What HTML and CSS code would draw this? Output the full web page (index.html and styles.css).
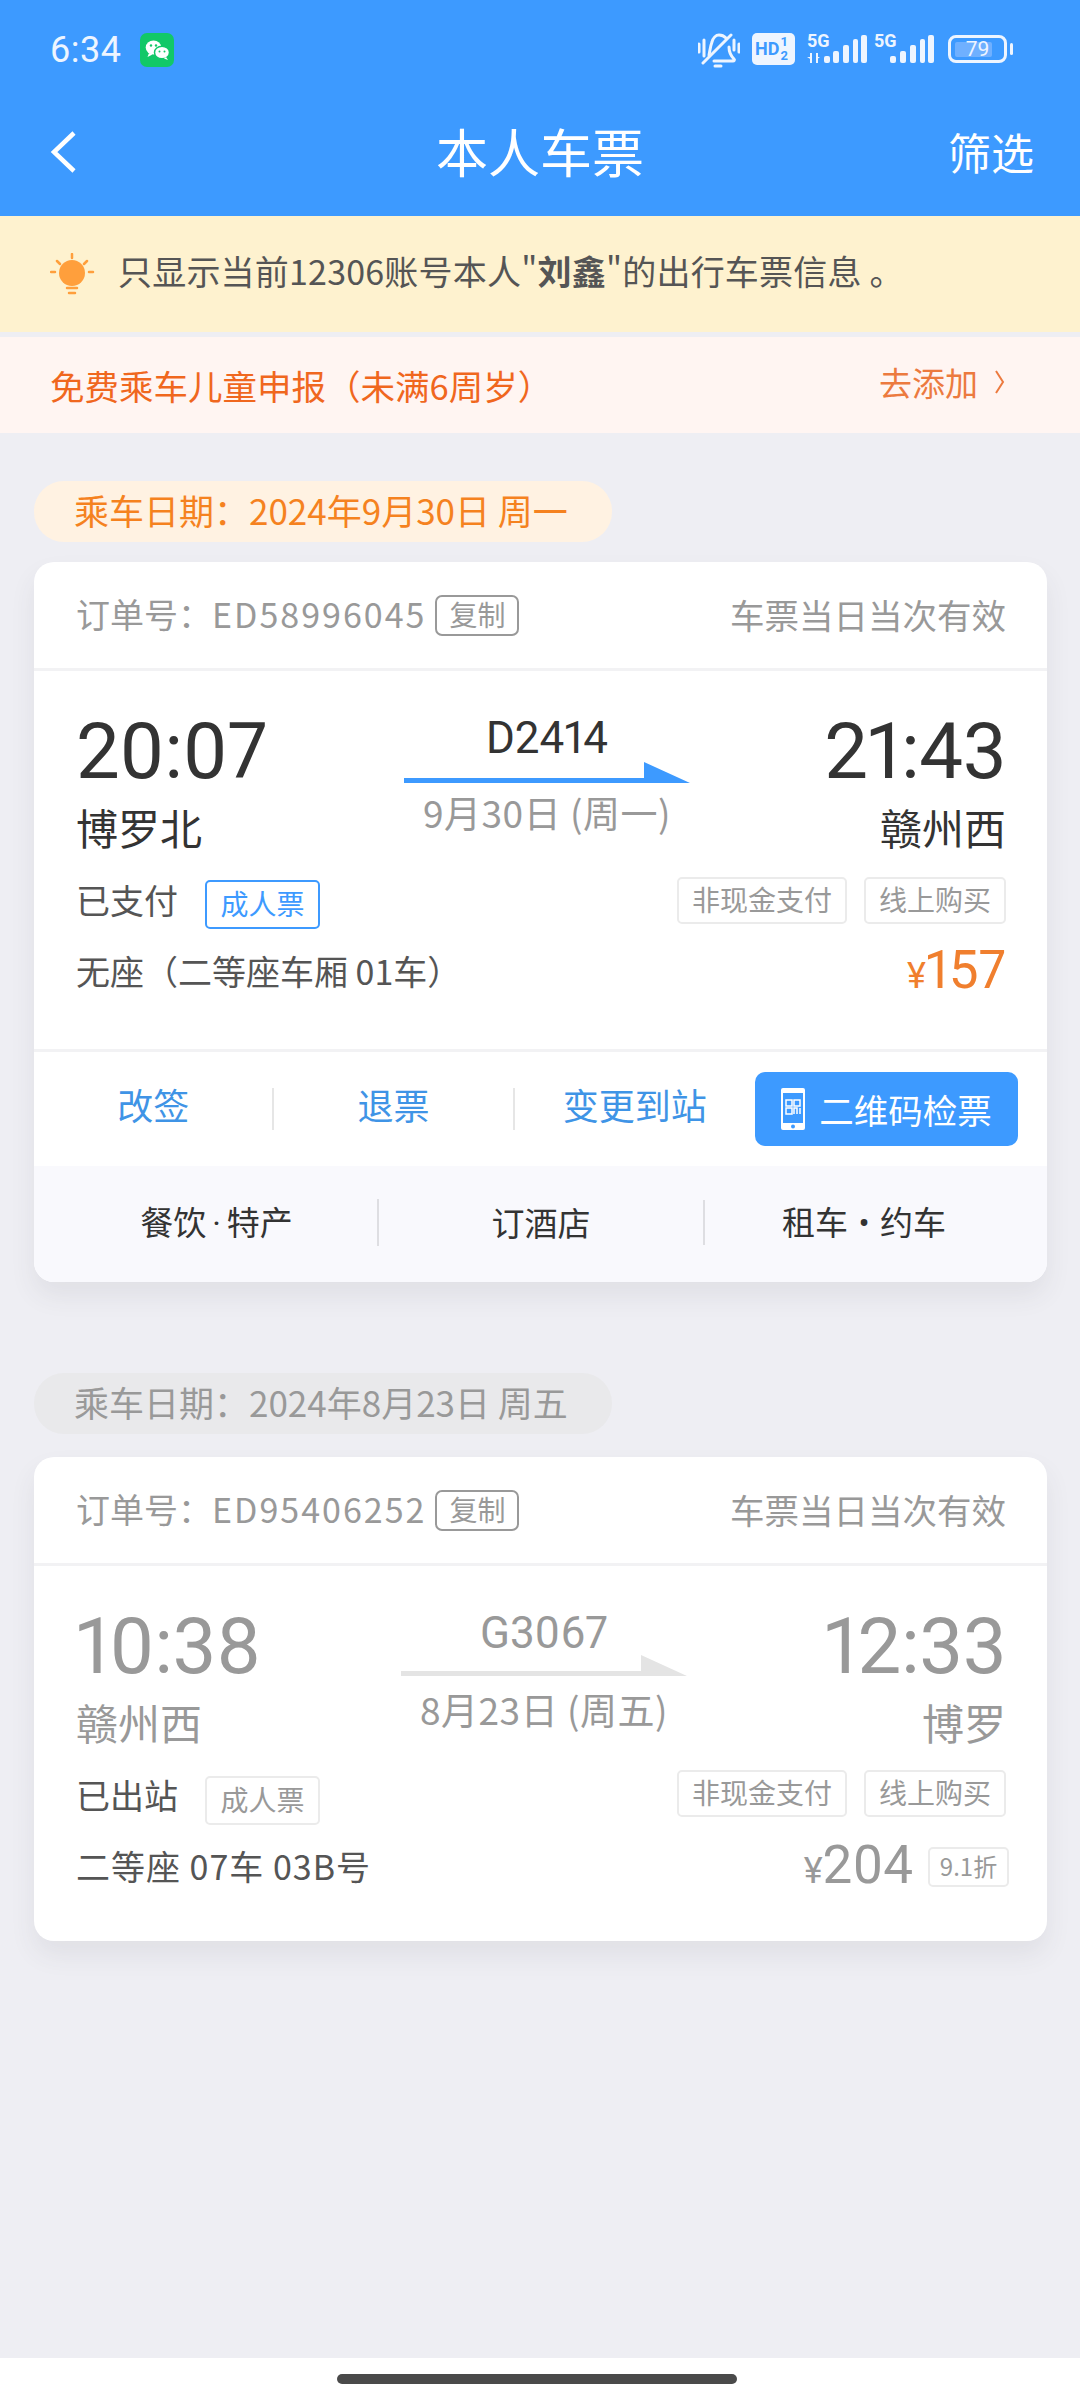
FILE: index.html
```html
<!DOCTYPE html>
<html lang="zh-CN">
<head>
    <meta charset="UTF-8">
    <meta name="viewport" content="width=device-width, initial-scale=1.0">
    <title>本人车票</title>
    <link rel="stylesheet" href="styles.css">
</head>
<body>

<header class="top">
    <div class="status">
        <span class="clock">6:34</span>
        <span class="wechat">
            <svg width="34" height="34" viewBox="0 0 34 34">
                <rect width="34" height="34" rx="7" fill="#12c868"/>
                <ellipse cx="13.500" cy="14.500" rx="7.800" ry="7" fill="#fff"/>
                <path d="M9 20l-1.500 4 5-2.500z" fill="#fff"/>
                <ellipse cx="22" cy="19.500" rx="7.500" ry="6.300" fill="#fff" stroke="#12c868" stroke-width="1.500"/>
                <path d="M26 24l2 3-4-1.500z" fill="#fff"/>
                <circle cx="11" cy="12.500" r="1.200" fill="#12c868"/>
                <circle cx="16" cy="12.500" r="1.200" fill="#12c868"/>
                <circle cx="19.500" cy="18.500" r="1" fill="#12c868"/>
                <circle cx="24.500" cy="18.500" r="1" fill="#12c868"/>
            </svg>
        </span>
        <span class="status-right">
            <svg width="42" height="35" viewBox="0 0 42 35" fill="none" stroke="#eef5ff" stroke-width="3" stroke-linecap="round">
                <path d="M11 22c1-4 1-8 3-13 1-4 4-7 7-7 3 0 5 1 7 3"/>
                <path d="M31 14c0 4 1 8 5 12 1 1 0 2-1 2H16"/>
                <path d="M5 30L33 2"/>
                <path d="M1 11v8M6 7v16M36 7v10M41 11v8"/>
                <path d="M17 33h6"/>
            </svg>
            <span class="hd">HD<span class="hd-sim"><i>1</i><i>2</i></span></span>
            <span class="net net-first">
                <span class="net-5g">5G</span>
                <svg width="60" height="30" viewBox="0 0 60 30" fill="#eef5ff">
                    <path d="M3 20h2v10H3zM0 24h5l0 3zM9 20h2v10H9zM9 24h4l-4 3z"/>
                    <rect x="17" y="23" width="6" height="7" rx="2"/>
                    <rect x="26" y="18" width="6" height="12" rx="2"/>
                    <rect x="36" y="12" width="6" height="18" rx="2"/>
                    <rect x="46" y="6" width="5" height="24" rx="2"/>
                    <rect x="54" y="2" width="6" height="28" rx="2"/>
                </svg>
            </span>
            <span class="net">
                <span class="net-5g">5G</span>
                <svg width="60" height="30" viewBox="0 0 60 30" fill="#eef5ff">
                    <rect x="16" y="23" width="6" height="7" rx="2"/>
                    <rect x="26" y="18" width="6" height="12" rx="2"/>
                    <rect x="36" y="12" width="6" height="18" rx="2"/>
                    <rect x="46" y="6" width="5" height="24" rx="2"/>
                    <rect x="54" y="2" width="6" height="28" rx="2"/>
                </svg>
            </span>
            <span class="battery"><span class="battery-fill"></span><span class="battery-num">79</span></span>
            <span class="battery-cap"></span>
        </span>
    </div>
    <div class="nav">
        <svg class="back" width="28" height="42" viewBox="0 0 28 42" fill="none" stroke="#fff" stroke-width="4.500">
            <path d="M25 2L5 21l20 19"/>
        </svg>
        <span class="nav-title">本人车票</span>
        <span class="nav-filter">筛选</span>
    </div>
</header>

<div class="notice">
    <svg class="bulb" width="45" height="42" viewBox="0 0 45 42">
        <g stroke="#ff9f3c" stroke-width="2.500" stroke-linecap="round" fill="none">
            <path d="M22 1v4M7 8l3 3M37 8l-3 3M1 19h4M39 19h4"/>
            <path d="M17 35h10"/>
            <path d="M19 40h6"/>
        </g>
        <circle cx="22" cy="20" r="13" fill="#ff9f3c"/>
    </svg>
    <span>只显示当前12306账号本人"<b>刘鑫</b>"的出行车票信息 。</span>
</div>

<div class="child-bar">
    <span>免费乘车儿童申报（未满6周岁）</span>
    <span class="child-add">去添加
        <svg width="11" height="24" viewBox="0 0 11 24" fill="none" stroke="#ec7a3f" stroke-width="2"><path d="M2 1l7 11-7 11"/></svg>
    </span>
</div>

<section class="trip">
    <div class="date-pill">乘车日期：2024年9月30日 周一</div>
    <div class="card">
        <div class="order">
            <span class="order-label">订单号：<span class="order-no">ED58996045</span></span>
            <span class="copy">复制</span>
            <span class="valid">车票当日当次有效</span>
        </div>
        <div class="ticket">
            <div class="route">
                <div class="end">
                    <div class="time">20:07</div>
                    <div class="station">博罗北</div>
                </div>
                <div class="mid">
                    <div class="train">D2414</div>
                    <svg class="arrow" width="286" height="22" viewBox="0 0 286 22"><path d="M0 16h240V0l46 21H0z" fill="#3d9aff"/></svg>
                    <div class="mid-date">9月30日 (周一)</div>
                </div>
                <div class="end end-right">
                    <div class="time">21:43</div>
                    <div class="station">赣州西</div>
                </div>
            </div>
            <div class="tags-row">
                <span class="state">已支付</span>
                <span class="tag-adult">成人票</span>
                <span class="tag">非现金支付</span>
                <span class="tag">线上购买</span>
            </div>
            <div class="seat-row">
                <span class="seat">无座（二等座车厢 01车）</span>
                <span class="price"><small>¥</small>157</span>
            </div>
        </div>
        <div class="actions">
            <span class="act act-line">改签</span>
            <span class="act act-line">退票</span>
            <span class="act">变更到站</span>
            <span class="qr-btn">
                <svg width="24" height="42" viewBox="0 0 24 42">
                    <path fill="#fff" fill-rule="evenodd" d="M2 0h20a2 2 0 0 1 2 2v38a2 2 0 0 1-2 2H2a2 2 0 0 1-2-2V2a2 2 0 0 1 2-2zM2 5v30h20V5z"/>
                    <circle cx="12" cy="38.500" r="2" fill="#3d9aff"/>
                    <g fill="none" stroke="#fff" stroke-width="1.500">
                        <rect x="5" y="12" width="6" height="6"/>
                        <rect x="13" y="12" width="6" height="6"/>
                        <rect x="5" y="20" width="6" height="6"/>
                        <path d="M13 26v-6h3v6M19 20v6"/>
                    </g>
                </svg>
                二维码检票
            </span>
        </div>
        <div class="extras">
            <span class="extra extra-food">餐饮<span class="dot">·</span>特产</span>
            <span class="extra extra-hotel">订酒店</span>
            <span class="extra extra-car">租车 <span class="dot">•</span> 约车</span>
        </div>
    </div>
</section>

<section class="trip trip-old">
    <div class="date-pill">乘车日期：2024年8月23日 周五</div>
    <div class="card">
        <div class="order">
            <span class="order-label">订单号：<span class="order-no">ED95406252</span></span>
            <span class="copy">复制</span>
            <span class="valid">车票当日当次有效</span>
        </div>
        <div class="ticket">
            <div class="route">
                <div class="end">
                    <div class="time">10:38</div>
                    <div class="station">赣州西</div>
                </div>
                <div class="mid">
                    <div class="train">G3067</div>
                    <svg class="arrow" width="286" height="22" viewBox="0 0 286 22"><path d="M0 16h240V0l46 21H0z" fill="#e4e4e4"/></svg>
                    <div class="mid-date">8月23日 (周五)</div>
                </div>
                <div class="end end-right">
                    <div class="time">12:33</div>
                    <div class="station">博罗</div>
                </div>
            </div>
            <div class="tags-row">
                <span class="state">已出站</span>
                <span class="tag-adult">成人票</span>
                <span class="tag">非现金支付</span>
                <span class="tag">线上购买</span>
            </div>
            <div class="seat-row">
                <span class="seat">二等座 07车 03B号</span>
                <span class="price"><small>¥</small>204</span>
                <span class="discount">9.1折</span>
            </div>
        </div>
    </div>
</section>

<div class="home-bar"><span class="home-pill"></span></div>

</body>
</html>
```

FILE: styles.css
```css
* {
    box-sizing: border-box;
}
html, body {
    margin: 0;
    padding: 0;
}
body {
    width: 1080px;
    height: 2400px;
    position: relative;
    overflow: hidden;
    background-color: #eeeef3;
    font-family: "Noto Sans CJK SC", Roboto, sans-serif;
    color: #333;
}

/* header */
.top {
    height: 216px;
    background-color: #3d9aff;
    color: #fff;
}
.status {
    height: 100px;
    padding: 30px 67px 0 50px;
    display: flex;
    align-items: flex-start;
}
.clock {
    font-family: Roboto, sans-serif;
    font-size: 36px;
    line-height: 40px;
    color: #eef5ff;
    letter-spacing: 0.5px;
}
.wechat {
    margin-left: 19px;
    margin-top: 3px;
    display: flex;
}
.status-right {
    margin-left: auto;
    display: flex;
    align-items: center;
    height: 40px;
    color: #eef5ff;
}
.hd {
    margin-left: 12px;
    margin-bottom: 2px;
    width: 43px;
    height: 32px;
    border-radius: 5px;
    background-color: #eef5ff;
    color: #3d9aff;
    font: bold 18px/32px Roboto, sans-serif;
    display: flex;
    padding-left: 3px;
}
.hd-sim {
    display: flex;
    flex-direction: column;
    font-size: 13px;
    line-height: 14px;
    margin-left: 1px;
    padding-top: 2px;
}
.hd-sim i {
    font-style: normal;
}
.net {
    position: relative;
    display: flex;
    height: 30px;
    margin-left: 7px;
    margin-bottom: 4px;
}
.net-first {
    margin-left: 12px;
}
.net-5g {
    position: absolute;
    left: 0;
    top: -1px;
    font: bold 18px/18px Roboto, sans-serif;
}
.battery {
    position: relative;
    margin-left: 14px;
    margin-bottom: 2px;
    width: 59px;
    height: 28px;
    border: 3px solid #eef5ff;
    border-radius: 8px;
}
.battery-fill {
    position: absolute;
    left: 4px;
    top: 4px;
    bottom: 3px;
    width: 37px;
    background-color: #6fb0ff;
    border-radius: 2px;
}
.battery-num {
    position: absolute;
    left: 0;
    right: 0;
    top: 0;
    text-align: center;
    font: 21px/22px Roboto, sans-serif;
}
.battery-cap {
    margin-left: 3px;
    margin-bottom: 2px;
    width: 3px;
    height: 12px;
    border-radius: 2px;
    background-color: #eef5ff;
}
.nav {
    height: 116px;
    padding: 0 46px 12px 49px;
    display: flex;
    align-items: center;
    position: relative;
}
.nav-title {
    position: absolute;
    left: 0;
    right: 0;
    top: 21px;
    text-align: center;
    font-size: 52px;
    line-height: 60px;
}
.nav-filter {
    margin-left: auto;
    margin-bottom: 3px;
    font-size: 43px;
    line-height: 60px;
}

/* yellow and pink bars */
.notice {
    height: 116px;
    background-color: #fef2cf;
    display: flex;
    align-items: center;
    padding: 0 0 8px 50px;
    gap: 23px;
    font-size: 34px;
    letter-spacing: 0.2px;
    color: #555;
}
.bulb {
    margin-top: 8px;
}
.notice b {
    font-weight: 700;
}
.child-bar {
    margin-top: 5px;
    height: 96px;
    background-color: #fff5f2;
    display: flex;
    align-items: center;
    justify-content: space-between;
    padding: 0 75px 0 50px;
    font-size: 34.500px;
    color: #f0671e;
}
.child-add {
    display: flex;
    align-items: center;
    gap: 16px;
    margin-bottom: 6px;
    font-size: 33px;
    color: #ec7a3f;
}

/* trips */
.trip {
    padding: 48px 33px 0 34px;
}
.trip-old {
    padding-top: 91px;
}
.date-pill {
    width: 578px;
    height: 61px;
    border-radius: 30px;
    background-color: #fff2e2;
    color: #f5821f;
    font-size: 35px;
    line-height: 58px;
    padding-left: 40px;
    white-space: nowrap;
}
.card {
    margin-top: 20px;
    background-color: #fff;
    border-radius: 20px;
    box-shadow: 0 14px 26px rgba(60, 60, 80, 0.08);
    overflow: hidden;
}
.trip-old .card {
    margin-top: 23px;
}
.order {
    height: 109px;
    padding: 0 41px 0 42px;
    border-bottom: 3px solid #f2f2f4;
    display: flex;
    align-items: center;
    font-size: 34px;
    color: #999;
}
.order-label {
    margin-bottom: 3px;
}
.order-no {
    letter-spacing: 2px;
}
.copy {
    margin-left: 9px;
    width: 84px;
    height: 41px;
    border: 2px solid #999;
    border-radius: 7px;
    font-size: 28px;
    line-height: 35px;
    text-align: center;
}
.valid {
    margin-left: auto;
    margin-bottom: 3px;
    font-size: 34.500px;
}
.ticket {
    padding: 0 41px 0 42px;
}
.route {
    display: flex;
    justify-content: space-between;
    height: 204px;
    padding-top: 41px;
}
.time {
    font-family: Roboto, sans-serif;
    font-variant-numeric: proportional-nums;
    font-size: 78px;
    line-height: 80px;
    letter-spacing: -0.5px;
    color: #333;
}
.station {
    font-size: 42px;
    line-height: 56px;
    margin-top: 7px;
    color: #333;
}
.end-right {
    text-align: right;
}
.mid {
    position: absolute;
    left: 404px;
    width: 286px;
    text-align: center;
}
.train {
    font-family: Roboto, sans-serif;
    font-variant-numeric: proportional-nums;
    font-size: 44px;
    line-height: 46px;
    margin-top: 3px;
    color: #333;
}
.arrow {
    display: block;
    margin-top: 1px;
}
.mid-date {
    font-size: 37px;
    line-height: 50px;
    margin-top: 3px;
    letter-spacing: 0.5px;
    color: #999;
    white-space: nowrap;
}
.tags-row {
    display: flex;
    align-items: flex-start;
    height: 65px;
}
.state {
    font-size: 34px;
    line-height: 50px;
    color: #555;
}
.tag-adult {
    margin-left: 27px;
    margin-top: 5px;
    width: 115px;
    height: 49px;
    border: 2px solid #3d9aff;
    border-radius: 5px;
    font-size: 28px;
    line-height: 43px;
    text-align: center;
    color: #3d9aff;
}
.tag {
    margin-top: 2px;
    height: 47px;
    border: 2px solid #ebebeb;
    border-radius: 5px;
    padding: 0 13px;
    font-size: 28px;
    line-height: 41px;
    color: #999;
}
.tag-adult + .tag {
    margin-left: auto;
    margin-right: 17px;
}
.seat-row {
    display: flex;
    align-items: center;
    height: 66px;
}
.seat {
    font-size: 34px;
    color: #555;
    margin-right: auto;
    margin-bottom: 6px;
}
.price {
    font-family: Roboto, sans-serif;
    font-variant-numeric: proportional-nums;
    font-size: 53px;
    line-height: 60px;
    color: #f07f2e;
}
.price small {
    font-size: 36px;
}
.discount {
    margin-left: 15px;
    margin-right: -3px;
    margin-bottom: 2px;
    width: 81px;
    height: 40px;
    border: 2px solid #ebebeb;
    border-radius: 5px;
    font-size: 24px;
    line-height: 34px;
    text-align: center;
    color: #999;
}

/* buttons under the ticket */
.actions {
    margin-top: 43px;
    height: 117px;
    border-top: 3px solid #f2f2f4;
    display: flex;
    align-items: center;
    padding: 0 29px 0 0;
}
.act {
    width: 241px;
    font-size: 36px;
    line-height: 32px;
    padding-bottom: 10px;
    text-align: center;
    color: #3f94e6;
    white-space: nowrap;
}
.act-line {
    border-right: 2px solid #e6e6e6;
}
.qr-btn {
    margin-left: auto;
    width: 264px;
    height: 74px;
    border-radius: 10px;
    background-color: #3d9aff;
    color: #fff;
    font-size: 34.500px;
    display: flex;
    align-items: center;
    justify-content: center;
    gap: 14px;
    white-space: nowrap;
}
.extras {
    height: 116px;
    background-color: #f9f9fd;
    display: flex;
    align-items: center;
    padding-bottom: 4px;
}
.extra {
    font-size: 33px;
    line-height: 45px;
    text-align: center;
    color: #333;
    white-space: nowrap;
}
.extra-food {
    width: 345px;
    padding-left: 22px;
    border-right: 2px solid #dedee2;
}
.extra-hotel {
    width: 326px;
    border-right: 2px solid #dedee2;
}
.extra-car {
    width: 342px;
    padding-right: 24px;
}
.dot {
    font-family: Roboto, sans-serif;
    margin: 0 6px;
}
.extra-car .dot {
    margin: 0 3px;
}

/* greyed out second card */
.trip-old .date-pill {
    background-color: #e9e9eb;
    color: #999;
}
.trip-old .time,
.trip-old .station,
.trip-old .train,
.trip-old .price {
    color: #999;
}
.trip-old .mid {
    left: 401px;
}
.trip-old .arrow {
    margin-top: -1px;
}
.trip-old .mid-date {
    margin-top: 7px;
}
.trip-old .tag-adult {
    margin-top: 6px;
    border-color: #ebebeb;
    color: #999;
}
.trip-old .tag {
    margin-top: 0;
}
.trip-old .seat {
    letter-spacing: 1px;
}
.trip-old .ticket {
    padding-bottom: 40px;
}

/* gesture bar */
.home-bar {
    position: absolute;
    left: 0;
    right: 0;
    bottom: 0;
    height: 42px;
    background-color: #fff;
    display: flex;
    justify-content: center;
    padding: 16px 7px 0 0;
}
.home-pill {
    width: 400px;
    height: 10px;
    border-radius: 5px;
    background-color: #4a4a4a;
}
```
